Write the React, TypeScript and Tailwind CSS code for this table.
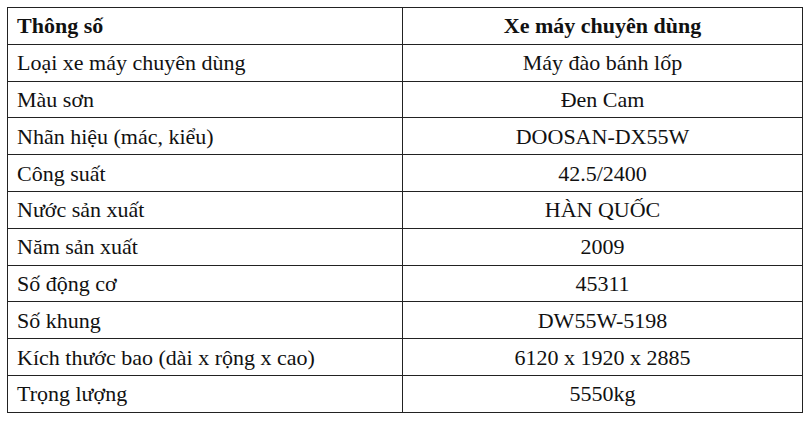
import React from "react";

const rows: [string, string][] = [
  ["Loại xe máy chuyên dùng", "Máy đào bánh lốp"],
  ["Màu sơn", "Đen Cam"],
  ["Nhãn hiệu (mác, kiểu)", "DOOSAN-DX55W"],
  ["Công suất", "42.5/2400"],
  ["Nước sản xuất", "HÀN QUỐC"],
  ["Năm sản xuất", "2009"],
  ["Số động cơ", "45311"],
  ["Số khung", "DW55W-5198"],
  ["Kích thước bao (dài x rộng x cao)", "6120 x 1920 x 2885"],
  ["Trọng lượng", "5550kg"],
];

export default function App() {
  return (
    <div
      className="w-[810px] h-[422px] bg-white pt-[7px] pl-[7px]"
      style={{ fontFamily: '"Liberation Serif", "Times New Roman", serif' }}
    >
      <table className="border-collapse text-[22px] leading-none text-[#111]">
        <tbody>
          <tr className="h-[36.8px]">
            <td className="w-[395px] border-[1.5px] border-[#222] pl-[9px] pt-[1px] font-bold">Thông số</td>
            <td className="w-[400px] border-[1.5px] border-[#222] pt-[1px] text-center font-bold">Xe máy chuyên dùng</td>
          </tr>
          {rows.map(([a, b]) => (
            <tr key={a} className="h-[36.8px]">
              <td className="border-[1.5px] border-[#222] pl-[9px] pt-[1px]">{a}</td>
              <td className="border-[1.5px] border-[#222] pt-[1px] text-center">{b}</td>
            </tr>
          ))}
        </tbody>
      </table>
    </div>
  );
}
